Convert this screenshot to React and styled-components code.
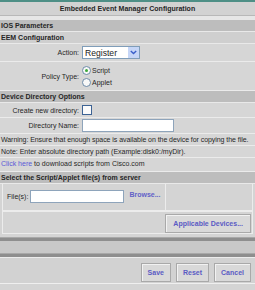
import React from "react";
import styled, { createGlobalStyle } from "styled-components";

const GlobalStyle = createGlobalStyle`
  html, body {
    margin: 0;
    padding: 0;
  }
  body {
    background: #d4d4d4;
    font-family: "Liberation Sans", Arial, sans-serif;
    font-size: 7px;
    color: #262626;
  }
`;

const Page = styled.div`
  width: 255px;
  height: 290px;
  overflow: hidden;
  background: #d4d4d4;
  display: flex;
  flex-direction: column;
`;

const TopStrip = styled.div`
  height: 2px;
  background: #4e8f86;
`;

const TitleBar = styled.div`
  height: 13px;
  line-height: 13px;
  text-align: center;
  font-weight: bold;
  background: #d2d2d2;
  border-bottom: 1px solid #b8b8b8;
`;

const Spacer = styled.div`
  height: ${(p) => p.h}px;
  flex-shrink: 0;
  background: ${(p) => p.bg || "#e6e6e6"};
`;

const SectionHeader = styled.div`
  height: 11px;
  line-height: 11px;
  padding-left: 1px;
  font-weight: bold;
  background: ${(p) => (p.light ? "#cfcfcf" : "#bdbdbd")};
  border-bottom: 1px solid #e9e9e9;
`;

const FormRow = styled.div`
  display: grid;
  grid-template-columns: 80px 1fr;
  align-items: center;
  height: ${(p) => p.h}px;
  background: #d6d6d6;
  border-bottom: 1px solid #ebebeb;
`;

const Label = styled.div`
  text-align: right;
  padding-right: 1px;
`;

const Value = styled.div`
  padding-left: 2px;
  display: flex;
  flex-direction: ${(p) => (p.column ? "column" : "row")};
  gap: ${(p) => (p.column ? "3px" : "0")};
  align-items: flex-start;
`;

const Select = styled.div`
  width: 54px;
  height: 11px;
  background: #fff;
  border: 1px solid #7f9db9;
  display: flex;
  align-items: center;
  justify-content: space-between;
  font-size: 8.6px;
  color: #222;
  padding-left: 2px;
`;

const SelectArrow = styled.span`
  width: 11px;
  height: 11px;
  background: #c6d6f7;
  display: flex;
  align-items: center;
  justify-content: center;
`;

const RadioLine = styled.label`
  display: flex;
  align-items: center;
  gap: 1px;
`;

const Radio = styled.span`
  width: 7px;
  height: 7px;
  border-radius: 50%;
  border: 1px solid #6d8aa8;
  background: #f8f8f8;
  display: flex;
  align-items: center;
  justify-content: center;

  &::after {
    content: "";
    width: 3px;
    height: 3px;
    border-radius: 50%;
    background: ${(p) => (p.checked ? "#3ca83c" : "transparent")};
  }
`;

const Checkbox = styled.span`
  width: 8px;
  height: 8px;
  border: 1px solid #3d6394;
  background: #fbfbfb;
`;

const TextInput = styled.div`
  width: ${(p) => p.w}px;
  height: 11px;
  background: #fff;
  border: 1px solid #8ea4bb;
`;

const NoteRow = styled.div`
  height: ${(p) => p.h || 11}px;
  line-height: 11px;
  padding-left: 1px;
  background: #d6d6d6;
  border-bottom: 1px solid #ebebeb;
  white-space: nowrap;
  letter-spacing: ${(p) => (p.tight ? "-0.06px" : "normal")};
`;

const Link = styled.span`
  color: #5a5ad6;
`;

const FileSection = styled.div`
  margin: 0 2px;
  display: grid;
  grid-template-columns: 163px 1fr;
  height: 26px;
  border: 1px solid #ececec;
  border-top: none;
`;

const FileCell = styled.div`
  display: flex;
  align-items: flex-start;
  padding: 6px 0 0 4px;
  gap: 2px;
  border-right: 1px solid #ececec;
`;

const FileLabel = styled.span`
  line-height: 13px;
`;

const BrowseLink = styled.span`
  color: #6262c8;
  font-weight: bold;
  margin-left: 3px;
  line-height: 9px;
`;

const DevicesRow = styled.div`
  margin: 0 2px;
  height: 21px;
  border: 1px solid #ececec;
  display: flex;
  justify-content: flex-end;
  align-items: flex-end;
  padding-right: 1px;
`;

const Button = styled.div`
  height: 17px;
  padding: 0 ${(p) => p.pad || 7}px;
  display: flex;
  align-items: center;
  justify-content: center;
  font-weight: bold;
  color: #5b5bc4;
  background: #d9d9d9;
  border: 1px solid #a9a9a9;
  box-shadow: inset 1px 1px 0 #f2f2f2;
`;

const Band = styled.div`
  height: 4px;
  flex-shrink: 0;
  background: #8e8e8e;
  border-top: 1px solid #a8a8a8;
  box-sizing: border-box;
`;

const Footer = styled.div`
  height: 27px;
  flex-shrink: 0;
  background: #d2d2d2;
  border-top: 1px solid #ececec;
  border-bottom: 1px solid #efefef;
  display: flex;
  justify-content: flex-end;
  align-items: center;
  gap: 5px;
  padding: 3px 4px 0 0;
  box-sizing: border-box;
`;

const Chevron = () => (
  <svg width="7" height="5" viewBox="0 0 7 5">
    <path d="M0.8 1 L3.5 3.6 L6.2 1" fill="none" stroke="#3a5fc9" strokeWidth="1.4" />
  </svg>
);

export default function App() {
  return (
    <>
      <GlobalStyle />
      <Page>
        <TopStrip />
        <TitleBar>Embedded Event Manager Configuration</TitleBar>
        <Spacer h={4} />
        <SectionHeader>IOS Parameters</SectionHeader>
        <SectionHeader light>EEM Configuration</SectionHeader>
        <FormRow h={17}>
          <Label>Action:</Label>
          <Value>
            <Select>
              Register
              <SelectArrow>
                <Chevron />
              </SelectArrow>
            </Select>
          </Value>
        </FormRow>
        <FormRow h={28}>
          <Label>Policy Type:</Label>
          <Value column>
            <RadioLine>
              <Radio checked />
              Script
            </RadioLine>
            <RadioLine>
              <Radio />
              Applet
            </RadioLine>
          </Value>
        </FormRow>
        <SectionHeader>Device Directory Options</SectionHeader>
        <FormRow h={14}>
          <Label>Create new directory:</Label>
          <Value>
            <Checkbox />
          </Value>
        </FormRow>
        <FormRow h={15}>
          <Label>Directory Name:</Label>
          <Value>
            <TextInput w={90} />
          </Value>
        </FormRow>
        <NoteRow tight>
          Warning: Ensure that enough space is available on the device for copying the file.
        </NoteRow>
        <NoteRow>Note: Enter absolute directory path (Example:disk0:/myDir).</NoteRow>
        <NoteRow h={13}>
          <Link>Click here</Link> to download scripts from Cisco.com
        </NoteRow>
        <SectionHeader>Select the Script/Applet file(s) from server</SectionHeader>
        <FileSection>
          <FileCell>
            <FileLabel>File(s):</FileLabel>
            <TextInput w={92} />
            <BrowseLink>Browse...</BrowseLink>
          </FileCell>
          <div />
        </FileSection>
        <DevicesRow>
          <Button>Applicable Devices...</Button>
        </DevicesRow>
        <Spacer h={3} bg="#d4d4d4" />
        <Band />
        <Spacer h={12} bg="#c8c8c8" />
        <Band />
        <Footer>
          <Button pad={6}>Save</Button>
          <Button pad={6}>Reset</Button>
          <Button pad={6}>Cancel</Button>
        </Footer>
      </Page>
    </>
  );
}
